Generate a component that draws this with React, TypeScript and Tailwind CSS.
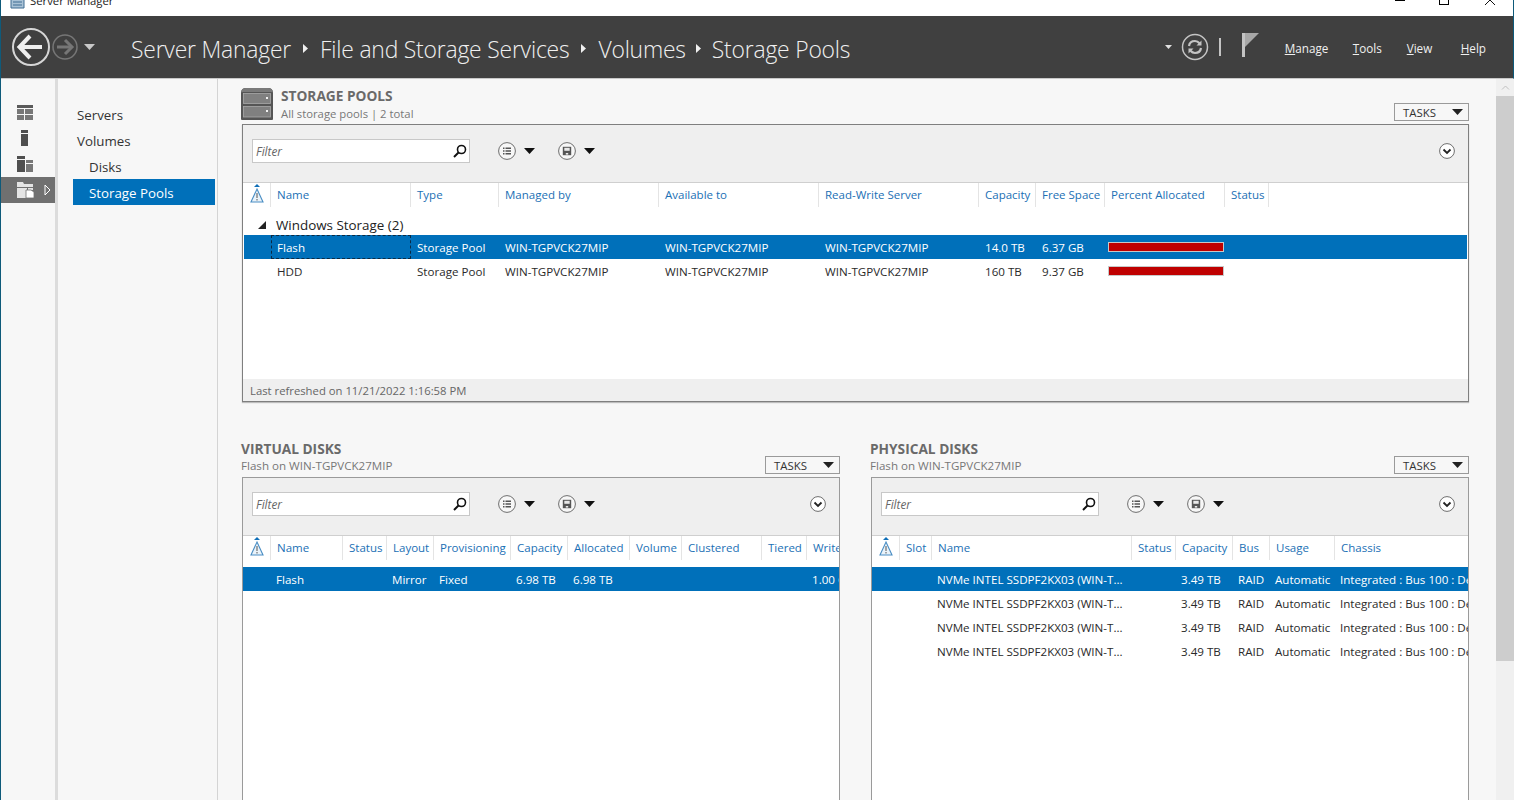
import React from "react";

type Col = { label: string; w: string };
type Row = { cells: string[]; selected?: boolean };

const Caret = ({ cls = "" }: { cls?: string }) => (
  <svg width="11" height="6" viewBox="0 0 11 6" className={`shrink-0 ${cls}`}>
    <path d="M0 0H11L5.5 6Z" fill="currentColor" />
  </svg>
);

const Crumb = ({ cls }: { cls: string }) => (
  <svg width="5" height="9" viewBox="0 0 5 9" className={`mb-[2px] shrink-0 ${cls}`}>
    <path d="M0 0L5 4.5L0 9Z" fill="#f0f0f0" />
  </svg>
);

function NavBack() {
  return (
    <svg width="40" height="40" viewBox="0 0 40 40" className="shrink-0">
      <circle cx="20" cy="20" r="18" fill="none" stroke="#d6d6d6" strokeWidth="2" />
      <path d="M9 20H31" stroke="#efefef" strokeWidth="4" />
      <path d="M19 9L8.5 20L19 31" fill="none" stroke="#efefef" strokeWidth="4" />
    </svg>
  );
}

function NavForward() {
  return (
    <svg width="26" height="26" viewBox="0 0 26 26" className="shrink-0">
      <circle cx="13" cy="13" r="12" fill="none" stroke="#767676" strokeWidth="1.5" />
      <path d="M5 13H20" stroke="#767676" strokeWidth="3" />
      <path d="M13 6L20 13L13 20" fill="none" stroke="#767676" strokeWidth="3" />
    </svg>
  );
}

function RefreshIcon() {
  return (
    <svg width="28" height="28" viewBox="0 0 28 28" className="shrink-0">
      <circle cx="14" cy="14" r="12.5" fill="none" stroke="#c4c4c4" strokeWidth="1.5" />
      <path d="M8 13C8.5 9.5 11 8 14 8C16 8 17.5 9 18.5 10.2" fill="none" stroke="#c4c4c4" strokeWidth="2.2" />
      <path d="M20.5 7.5V12.5H15.5Z" fill="#c4c4c4" />
      <path d="M20 15C19.5 18.5 17 20 14 20C12 20 10.5 19 9.5 17.8" fill="none" stroke="#c4c4c4" strokeWidth="2.2" />
      <path d="M7.5 20.5V15.5H12.5Z" fill="#c4c4c4" />
    </svg>
  );
}

function FlagIcon() {
  return (
    <svg width="18" height="24" viewBox="0 0 18 24" className="shrink-0">
      <rect x="0" y="0" width="3" height="24" fill="#c4c4c4" />
      <path d="M3 0H17L3 14Z" fill="#a8a8a8" />
    </svg>
  );
}

function DashboardIcon() {
  return (
    <svg width="16" height="15" viewBox="0 0 16 15">
      <rect width="16" height="3" fill="#5a5a5a" />
      <rect y="4" width="7" height="5" fill="#777" />
      <rect x="8" y="4" width="8" height="5" fill="#777" />
      <rect y="10" width="7" height="5" fill="#777" />
      <rect x="8" y="10" width="8" height="5" fill="#777" />
    </svg>
  );
}
function LocalIcon() {
  return (
    <svg width="7" height="16" viewBox="0 0 7 16">
      <rect width="7" height="3" fill="#4f4f4f" />
      <rect y="4" width="7" height="12" fill="#4f4f4f" />
    </svg>
  );
}
function AllIcon() {
  return (
    <svg width="16" height="16" viewBox="0 0 16 16">
      <rect width="8" height="3" fill="#4f4f4f" />
      <rect y="4" width="8" height="12" fill="#4f4f4f" />
      <rect x="9" y="4" width="7" height="3" fill="#777" />
      <rect x="9" y="8" width="7" height="8" fill="#777" />
    </svg>
  );
}
function FilesIcon() {
  return (
    <svg width="17" height="16" viewBox="0 0 17 16">
      <path d="M0 0H6L7 2H16V5H0Z" fill="#e4e4e4" />
      <path d="M0 6H10V16H0Z" fill="#e4e4e4" />
      <path d="M11 6H16V8H11Z" fill="#e4e4e4" />
      <path d="M9 8H14L17 10V16H9Z" fill="#ffffff" stroke="#707070" strokeWidth="0.8" />
    </svg>
  );
}

function ServerIcon() {
  return (
    <svg width="32" height="32" viewBox="0 0 32 32" className="shrink-0">
      <path d="M5 0H27Q32 0 32 5V31Q32 32 31 32H1Q0 32 0 31V5Q0 0 5 0Z" fill="#555" />
      <path d="M5 0H27Q31 0 32 4H0Q1 0 5 0Z" fill="#7a7a7a" />
      <rect x="2.5" y="5.5" width="27" height="10" fill="#808080" stroke="#a8a8a8" strokeWidth="0.8" />
      <rect x="2.5" y="18.5" width="27" height="10.5" fill="#808080" stroke="#a8a8a8" strokeWidth="0.8" />
      <rect x="25" y="9" width="2" height="2" fill="#f2f2f2" />
      <rect x="25" y="22" width="2" height="2" fill="#f2f2f2" />
    </svg>
  );
}

function SearchIcon() {
  return (
    <svg width="14" height="14" viewBox="0 0 14 14" className="shrink-0">
      <circle cx="8.5" cy="5.5" r="4" fill="none" stroke="#111" strokeWidth="1.6" />
      <path d="M5.5 8.5L1 13" stroke="#111" strokeWidth="2" />
    </svg>
  );
}

function ListIcon() {
  return (
    <svg width="18" height="18" viewBox="0 0 18 18" className="shrink-0">
      <circle cx="9" cy="9" r="8.4" fill="#f7f7f7" stroke="#6e6e6e" strokeWidth="1" />
      <path d="M5 5.5H6.5V7H5ZM5 8.3H6.5V9.8H5ZM5 11H6.5V12.5H5ZM7.5 5.5H13V7H7.5ZM7.5 8.3H13V9.8H7.5ZM7.5 11H13V12.5H7.5Z" fill="#555" />
    </svg>
  );
}

function SaveIcon() {
  return (
    <svg width="18" height="18" viewBox="0 0 18 18" className="shrink-0">
      <circle cx="9" cy="9" r="8.4" fill="#f7f7f7" stroke="#6e6e6e" strokeWidth="1" />
      <path d="M4.8 4.8H13.2V13.2H4.8Z" fill="#555" />
      <path d="M6.3 5.8H11.7V8.8H6.3Z" fill="#e8e8e8" />
      <path d="M7.8 11H10.2V12.6H7.8Z" fill="#e8e8e8" />
    </svg>
  );
}

function ChevronIcon() {
  return (
    <svg width="16" height="16" viewBox="0 0 16 16" className="shrink-0">
      <circle cx="8" cy="8" r="7.4" fill="#fff" stroke="#6e6e6e" strokeWidth="1" />
      <path d="M4.5 6.5L8 10L11.5 6.5" fill="none" stroke="#222" strokeWidth="1.8" />
    </svg>
  );
}

function WarnIcon() {
  return (
    <svg width="14" height="19" viewBox="0 0 14 19" className="shrink-0">
      <path d="M4 3L7 0L10 3Z" fill="#0f6fb8" />
      <path d="M7 5L13 18H1Z" fill="#eaf3fa" stroke="#4a8ec4" strokeWidth="1.1" />
      <path d="M7 9V14M7 15V16.5" stroke="#555" strokeWidth="1" />
    </svg>
  );
}

function TasksButton() {
  return (
    <button className="w-[75px] h-[18px] border border-[#9a9a9a] bg-[#f7f7f7] flex items-center pl-[8px] pr-[5px] text-[11.4px] text-[#333] shrink-0">
      <span className="pt-px">TASKS</span>
      <Caret cls="ml-auto text-[#222]" />
    </button>
  );
}

function Toolbar() {
  return (
    <div className="h-[58px] shrink-0 bg-[#efefef] border-b border-[#cfcfcf] flex items-start pl-[9px] pr-[13px] pt-[14px]">
      <div className="w-[218px] h-[24px] bg-white border border-[#c8c8c8] flex items-center pl-[3px] pr-[2px]">
        <span className="text-[11.8px] italic text-[#666] pt-[2px]">Filter</span>
        <span className="ml-auto">
          <SearchIcon />
        </span>
      </div>
      <div className="flex items-center h-[24px] ml-[28px] text-[#111]">
        <ListIcon />
        <Caret cls="ml-[8px]" />
        <span className="ml-[23px]">
          <SaveIcon />
        </span>
        <Caret cls="ml-[8px]" />
      </div>
      <div className="ml-auto h-[24px] flex items-center">
        <ChevronIcon />
      </div>
    </div>
  );
}

function HeaderRow({ cols, iconW }: { cols: Col[]; iconW: string }) {
  return (
    <div className="h-[24px] shrink-0 flex bg-white overflow-hidden whitespace-nowrap">
      <div className={`${iconW} shrink-0 border-r border-[#e4e4e4] flex justify-center pt-[1px]`}>
        <WarnIcon />
      </div>
      {cols.map((c) => (
        <div
          key={c.label}
          className={`${c.w} shrink-0 border-r border-[#e4e4e4] pl-[6px] text-[11.5px] leading-[24px] text-[#1b70b5] overflow-hidden`}
        >
          {c.label}
        </div>
      ))}
    </div>
  );
}

function DataRow({
  row,
  cols,
  iconW,
  focusFirst,
  compact,
}: {
  row: Row;
  cols: Col[];
  iconW: string;
  focusFirst?: boolean;
  compact?: boolean;
}) {
  return (
    <div
      className={`h-[24px] shrink-0 flex overflow-hidden whitespace-nowrap text-[11.6px] leading-[26px] ${
        row.selected ? "bg-[#0070ba] text-white" : "bg-white text-[#2a2a2a]"
      }`}
    >
      <div className={`${iconW} shrink-0`} />
      {row.cells.map((cell, i) => (
        <div
          key={i}
          className={`${cols[i].w} shrink-0 overflow-hidden ${
            focusFirst && i === 0
              ? "border border-dashed border-[#0b2a44] leading-[24px] pl-[5px]"
              : compact
                ? "pl-[5px]"
                : "pl-[6px]"
          }`}
        >
          {cell === "BAR" ? (
            <div className="h-[10px] w-[116px] -ml-[3px] mt-[7px] bg-[#bf0000] border border-[#c8c8c8]" />
          ) : (
            cell
          )}
        </div>
      ))}
    </div>
  );
}

const poolCols: Col[] = [
  { label: "Name", w: "w-[140px]" },
  { label: "Type", w: "w-[88px]" },
  { label: "Managed by", w: "w-[160px]" },
  { label: "Available to", w: "w-[160px]" },
  { label: "Read-Write Server", w: "w-[160px]" },
  { label: "Capacity", w: "w-[57px]" },
  { label: "Free Space", w: "w-[69px]" },
  { label: "Percent Allocated", w: "w-[120px]" },
  { label: "Status", w: "w-[44px]" },
];

const vdCols: Col[] = [
  { label: "Name", w: "w-[72px]" },
  { label: "Status", w: "w-[44px]" },
  { label: "Layout", w: "w-[47px]" },
  { label: "Provisioning", w: "w-[77px]" },
  { label: "Capacity", w: "w-[57px]" },
  { label: "Allocated", w: "w-[62px]" },
  { label: "Volume", w: "w-[52px]" },
  { label: "Clustered", w: "w-[80px]" },
  { label: "Tiered", w: "w-[45px]" },
  { label: "Write", w: "w-[60px]" },
];

const pdCols: Col[] = [
  { label: "Slot", w: "w-[32px]" },
  { label: "Name", w: "w-[200px]" },
  { label: "Status", w: "w-[44px]" },
  { label: "Capacity", w: "w-[57px]" },
  { label: "Bus", w: "w-[37px]" },
  { label: "Usage", w: "w-[65px]" },
  { label: "Chassis", w: "w-[160px]" },
];

const pdCells = ["", "NVMe INTEL SSDPF2KX03 (WIN-T...", "", "3.49 TB", "RAID", "Automatic", "Integrated : Bus 100 : Device 0"];

function BottomSection({ title, cols, iconW, rows }: { title: string; cols: Col[]; iconW: string; rows: Row[] }) {
  return (
    <section className="w-[599px] flex flex-col min-w-0">
      <div className="h-[36px] flex items-start justify-between shrink-0">
        <div>
          <div className="text-[13.7px] font-bold text-[#6a6a6a] leading-[16px]">{title}</div>
          <div className="text-[11.6px] text-[#777] leading-[18px]">Flash on WIN-TGPVCK27MIP</div>
        </div>
        <div className="mt-[15px]">
          <TasksButton />
        </div>
      </div>
      <div className="ml-px h-[330px] border border-[#9a9a9a] border-b-0 bg-white flex flex-col overflow-hidden">
        <Toolbar />
        <HeaderRow cols={cols} iconW={iconW} />
        <div className="h-[7px] shrink-0" />
        {rows.map((r, i) => (
          <DataRow key={i} row={r} cols={cols} iconW={iconW} compact />
        ))}
      </div>
    </section>
  );
}

export default function App() {
  return (
    <div
      className="w-[1514px] h-[800px] overflow-hidden flex flex-col bg-[#f7f7f7] border-l border-[#0e5a7a]"
      style={{ fontFamily: '"Open Sans", "Noto Sans", sans-serif' }}
    >
      {/* Title bar */}
      <div className="h-[16px] shrink-0 bg-white border-r border-[#0e5a7a] flex items-end overflow-hidden">
        <div className="flex items-center h-[16px] -translate-y-[7px] pl-[9px]">
          <svg width="15" height="15" viewBox="0 0 15 15" className="shrink-0">
            <path d="M1 3H14V14H1Z" fill="#a9c2d6" stroke="#3f6d92" />
            <path d="M3 8H12M3 11H12" stroke="#3f6d92" />
          </svg>
          <span className="ml-[5px] text-[11.3px] text-[#222] whitespace-nowrap">Server Manager</span>
        </div>
        <div className="ml-auto flex items-center h-[16px] -translate-y-[8px]">
          <span className="w-[10px] h-px bg-black mr-[34px]" />
          <span className="w-[10px] h-[10px] border border-black mr-[36px]" />
          <svg width="10" height="10" viewBox="0 0 10 10" className="mr-[18px]">
            <path d="M0 0L10 10M10 0L0 10" stroke="#111" />
          </svg>
        </div>
      </div>

      {/* Header */}
      <header className="h-[63px] shrink-0 bg-[#404040] border-b border-[#c8c8c8] border-r-[#0e5a7a] border-r flex items-center pl-[10px] pr-[27px] text-[#f0f0f0]">
        <NavBack />
        <span className="ml-[1px]">
          <NavForward />
        </span>
        <Caret cls="ml-[6px] text-[#c8c8c8]" />
        <div className="flex items-center ml-[36px] pt-[6px] text-[22.9px] font-light whitespace-nowrap tracking-[-0.2px]">
          <span>Server Manager</span>
          <Crumb cls="ml-[12px] mr-[12px]" />
          <span>File and Storage Services</span>
          <Crumb cls="ml-[12px] mr-[12px]" />
          <span>Volumes</span>
          <Crumb cls="ml-[10px] mr-[11px]" />
          <span>Storage Pools</span>
        </div>
        <div className="ml-auto flex items-center">
          <svg width="7" height="4" viewBox="0 0 7 4" className="shrink-0">
            <path d="M0 0H7L3.5 4Z" fill="#e0e0e0" />
          </svg>
          <span className="ml-[9px]">
            <RefreshIcon />
          </span>
          <span className="w-[2px] h-[18px] bg-[#c4c4c4] ml-[10px]" />
          <span className="ml-[21px] -mt-[4px]">
            <FlagIcon />
          </span>
          <nav className="flex text-[11.7px] ml-[25px] pt-[3px]">
            <span className="w-[68px]">
              <span className="underline">M</span>anage
            </span>
            <span className="w-[54px]">
              <span className="underline">T</span>ools
            </span>
            <span className="w-[54px]">
              <span className="underline">V</span>iew
            </span>
            <span>
              <span className="underline">H</span>elp
            </span>
          </nav>
        </div>
      </header>

      {/* Body */}
      <div className="flex-1 flex min-h-0">
        {/* Icon rail */}
        <aside className="w-[54px] shrink-0 pt-[20px] flex flex-col">
          <div className="h-[26px] flex items-center pl-[16px]">
            <DashboardIcon />
          </div>
          <div className="h-[26px] flex items-center pl-[20px]">
            <LocalIcon />
          </div>
          <div className="h-[26px] flex items-center pl-[16px]">
            <AllIcon />
          </div>
          <div className="h-[26px] flex items-center pl-[16px] bg-[#707070]">
            <FilesIcon />
            <svg width="7" height="12" viewBox="0 0 7 12" className="ml-[10px]">
              <path d="M1 1L6 6L1 11Z" fill="none" stroke="#fff" />
            </svg>
          </div>
        </aside>
        <div className="w-[3px] shrink-0 bg-[#dcdcdc]" />

        {/* Nav */}
        <nav className="w-[160px] shrink-0 border-r border-[#d4d4d4] pl-[15px] pr-[2px] pt-[22px] text-[13.3px] text-[#333]">
          <div className="h-[26px] leading-[28px] pl-[4px]">Servers</div>
          <div className="h-[26px] leading-[28px] pl-[4px]">Volumes</div>
          <div className="h-[26px] leading-[28px] pl-[16px]">Disks</div>
          <div className="h-[26px] leading-[28px] pl-[16px] bg-[#0070ba] text-white">Storage Pools</div>
        </nav>

        {/* Content */}
        <main className="flex-1 min-w-0 pl-[23px] pt-[9px] overflow-hidden">
          <section className="w-[1228px]">
            <div className="h-[36px] flex items-start">
              <ServerIcon />
              <div className="ml-[8px]">
                <div className="text-[13.7px] font-bold text-[#6a6a6a] leading-[16px]">STORAGE POOLS</div>
                <div className="text-[11.3px] text-[#777] leading-[18px] mt-px">All storage pools | 2 total</div>
              </div>
              <div className="ml-auto mt-[15px]">
                <TasksButton />
              </div>
            </div>
            <div className="ml-px h-[278px] border border-[#7f7f7f] shadow-[0_1px_1px_#bdbdbd] bg-white flex flex-col">
              <Toolbar />
              <div className="flex-1 min-h-0 px-px flex flex-col">
                <HeaderRow cols={poolCols} iconW="w-[27px]" />
                <div className="h-[28px] shrink-0 flex items-end text-[13.4px] leading-[20px] text-[#222]">
                  <svg width="8" height="8" viewBox="0 0 8 8" className="ml-[14px] mb-[6px] shrink-0">
                    <path d="M8 0V8H0Z" fill="#222" />
                  </svg>
                  <span className="ml-[10px]">Windows Storage (2)</span>
                </div>
                <DataRow
                  focusFirst
                  iconW="w-[27px]"
                  cols={poolCols}
                  row={{
                    selected: true,
                    cells: ["Flash", "Storage Pool", "WIN-TGPVCK27MIP", "WIN-TGPVCK27MIP", "WIN-TGPVCK27MIP", "14.0 TB", "6.37 GB", "BAR", ""],
                  }}
                />
                <DataRow
                  iconW="w-[27px]"
                  cols={poolCols}
                  row={{
                    cells: ["HDD", "Storage Pool", "WIN-TGPVCK27MIP", "WIN-TGPVCK27MIP", "WIN-TGPVCK27MIP", "160 TB", "9.37 GB", "BAR", ""],
                  }}
                />
              </div>
              <div className="h-[22px] shrink-0 bg-[#efefef] pl-[7px] text-[11.3px] leading-[24px] text-[#666]">
                Last refreshed on 11/21/2022 1:16:58 PM
              </div>
            </div>
          </section>

          <div className="flex gap-[30px] mt-[39px] w-[1228px]">
            <BottomSection
              title="VIRTUAL DISKS"
              cols={vdCols}
              iconW="w-[28px]"
              rows={[{ selected: true, cells: ["Flash", "", "Mirror", "Fixed", "6.98 TB", "6.98 TB", "", "", "", "1.00 GB"] }]}
            />
            <BottomSection
              title="PHYSICAL DISKS"
              cols={pdCols}
              iconW="w-[28px]"
              rows={[
                { selected: true, cells: pdCells },
                { cells: pdCells },
                { cells: pdCells },
                { cells: pdCells },
              ]}
            />
          </div>
        </main>

        {/* Scrollbar */}
        <div className="w-[18px] shrink-0 flex flex-col bg-[#f0f0f0]">
          <div className="h-[17px] flex items-center justify-center">
            <svg width="9" height="5" viewBox="0 0 9 5">
              <path d="M1 4.5L4.5 1L8 4.5" fill="none" stroke="#c0c0c0" />
            </svg>
          </div>
          <div className="h-[565px] bg-[#cdcdcd]" />
        </div>
      </div>
    </div>
  );
}
